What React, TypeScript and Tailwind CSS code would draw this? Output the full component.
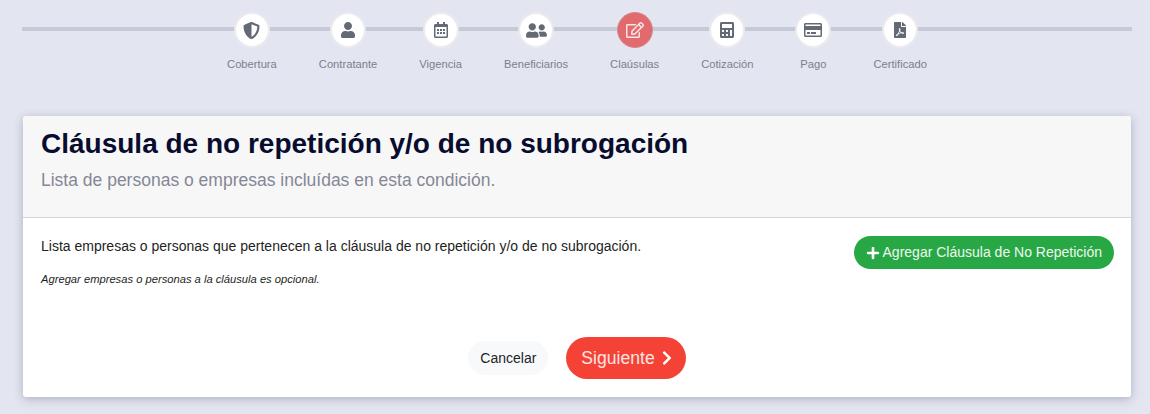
import {
  FaCalculator,
  FaChevronRight,
  FaFilePdf,
  FaPlus,
  FaRegCalendarAlt,
  FaRegCreditCard,
  FaRegEdit,
  FaShieldAlt,
  FaUser,
  FaUserFriends,
} from "react-icons/fa";

const steps = [
  { label: "Cobertura", icon: FaShieldAlt, size: "text-[17px]" },
  { label: "Contratante", icon: FaUser, size: "text-[16px]" },
  { label: "Vigencia", icon: FaRegCalendarAlt, size: "text-[16px]" },
  { label: "Beneficiarios", icon: FaUserFriends, size: "text-[21px]" },
  { label: "Claúsulas", icon: FaRegEdit, size: "text-[18px]", active: true },
  { label: "Cotización", icon: FaCalculator, size: "text-[16px]" },
  { label: "Pago", icon: FaRegCreditCard, size: "text-[18px]" },
  { label: "Certificado", icon: FaFilePdf, size: "text-[16px]" },
];

const App = () => {
  return (
    <div className="h-[414px] overflow-hidden bg-[#e3e6f0] pl-[22px] pr-[18px] font-['Liberation_Sans',Arial,sans-serif]">
      {/* Stepper */}
      <div className="relative h-[116px] pt-[12px]">
        <div className="absolute left-0 right-0 top-[27px] h-[4px] bg-[#c6cad7]" />
        <div className="relative flex justify-center">
          {steps.map((step) => (
            <div key={step.label} className="flex min-w-[78px] flex-col items-center px-[21px]">
              <div
                className={
                  step.active
                    ? "flex h-[36px] w-[36px] items-center justify-center rounded-full border border-[#d98a8c] bg-[#e06a6d] text-[#fbe4e4]"
                    : "flex h-[36px] w-[36px] items-center justify-center rounded-full border-2 border-[#ebebef] bg-white text-[#646a74]"
                }
              >
                <step.icon className={step.size} />
              </div>
              <span className="mt-[9px] whitespace-nowrap text-[11.2px] leading-[14px] text-[#7b808c]">{step.label}</span>
            </div>
          ))}
        </div>
      </div>

      {/* Card */}
      <div className="ml-px mr-px h-[281px] rounded-[3px] bg-white shadow-[0_2px_10px_rgba(50,55,80,0.3)]">
        <div className="h-[102px] rounded-t-[3px] border-b border-[#d5d6da] bg-[#f7f7f8] px-[18px] pt-[12px]">
          <h1 className="text-[28px] font-bold leading-[32px] text-[#080c2e]">Cláusula de no repetición y/o de no subrogación</h1>
          <p className="mt-[10px] text-[17.5px] leading-[20px] text-[#858796]">Lista de personas o empresas incluídas en esta condición.</p>
        </div>
        <div className="flex items-start justify-between pl-[18px] pr-[17px] pt-[18px]">
          <div>
            <p className="text-[14px] leading-[21px] text-[#1d1f24]">
              Lista empresas o personas que pertenecen a la cláusula de no repetición y/o de no subrogación.
            </p>
            <p className="mt-[15px] text-[11.2px] italic leading-[14px] text-[#1d1f24]">
              Agregar empresas o personas a la cláusula es opcional.
            </p>
          </div>
          <button className="flex h-[33px] items-center gap-[3px] rounded-full bg-[#28a745] px-[12px] text-[14px] text-[#eef8f0]">
            <FaPlus className="text-[14px] text-white" />
            Agregar Cláusula de No Repetición
          </button>
        </div>
        <div className="mt-[51px] flex items-center justify-center gap-[18px]">
          <button className="h-[34px] rounded-full bg-[#f8f9fa] px-[12px] text-[14px] text-[#212529]">Cancelar</button>
          <button className="flex h-[42px] items-center gap-[4px] rounded-full bg-[#f44336] pl-[15px] pr-[11px] text-[17.6px] text-[#fde4e2]">
            Siguiente
            <FaChevronRight className="text-[16px] text-white" />
          </button>
        </div>
      </div>
    </div>
  );
};

export default App;
